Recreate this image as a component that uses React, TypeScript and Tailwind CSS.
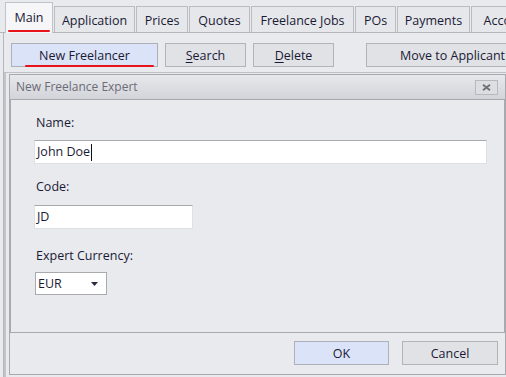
import { ReactNode } from "react";

const tabs = [
  { label: "Application", w: "w-[81px]" },
  { label: "Prices", w: "w-[52px]" },
  { label: "Quotes", w: "w-[61px]" },
  { label: "Freelance Jobs", w: "w-[103px]" },
  { label: "POs", w: "w-[41px]" },
  { label: "Payments", w: "w-[73px]" },
  { label: "Accounting", w: "w-[90px]" },
];

type BtnProps = {
  children: ReactNode;
  className?: string;
  primary?: boolean;
};

const Btn = ({ children, className, primary }: BtnProps) => {
  return (
    <div
      className={
        "flex h-[24px] shrink-0 items-center justify-center border pt-[1px] " +
        (primary
          ? "border-[#adb0b9] bg-[#dbe3f8] "
          : "border-[#b3b4b9] bg-[#e1e2e6] ") +
        (className || "")
      }
    >
      {children}
    </div>
  );
};

const App = () => {
  return (
    <div
      className="flex h-[377px] w-[506px] flex-col overflow-hidden bg-[#e9eaee] text-[12.5px] leading-[16px] text-[#1a1a35]"
      style={{ fontFamily: '"Open Sans", "Noto Sans", sans-serif' }}
    >
      {/* tab strip */}
      <div className="flex h-[33px] shrink-0 items-end border-b border-[#b5b6bd] pl-[5px]">
        <div className="relative z-10 mb-[-1px] flex h-[31px] w-[48px] shrink-0 items-center justify-center border border-b-0 border-[#c2c3c9] bg-[#f6f6f8] pb-[1px]">
          Main
          <div className="absolute bottom-[1px] left-[2px] h-[2px] w-[42px] rounded-full bg-[#e8141c]" />
        </div>
        {tabs.map((t) => (
          <div
            key={t.label}
            className={
              "ml-[1px] flex h-[26px] shrink-0 items-center justify-center overflow-hidden whitespace-nowrap border border-b-0 border-[#bbbcc2] bg-[#e6e7eb] pt-[2px] " +
              t.w
            }
          >
            {t.label}
          </div>
        ))}
      </div>

      {/* tab page */}
      <div className="ml-[3px] flex flex-1 flex-col border-l border-[#b5b6bd]">
        {/* toolbar */}
        <div className="flex h-[40px] shrink-0 items-start gap-[7px] border-b border-[#c0c1c7] pl-[7px] pt-[10px]">
          <Btn primary className="relative w-[147px]">
            New Freelancer
            <div className="absolute bottom-[-1px] left-[13px] h-[2px] w-[129px] rounded-full bg-[#e8141c]" />
          </Btn>
          <Btn className="w-[81px]">
            <span>
              <span className="underline underline-offset-2">S</span>earch
            </span>
          </Btn>
          <Btn className="w-[81px]">
            <span>
              <span className="underline underline-offset-2">D</span>elete
            </span>
          </Btn>
          <Btn className="ml-[25px] w-[170px] justify-start pl-[33px]">Move to Applicant</Btn>
        </div>

        {/* dialog layer */}
        <div className="flex flex-1 flex-col border-l-2 border-[#c3c4ca] pl-[3px] pt-[1px]">
          <div className="flex h-[301px] w-[497px] shrink-0 flex-col border border-[#a7a8b0] bg-[#e9eaee]">
            {/* title bar */}
            <div className="flex h-[24px] shrink-0 items-center justify-between bg-gradient-to-b from-[#e7e8ec] to-[#d3d4d9] pl-[6px] pr-[7px]">
              <span className="text-[12px] text-[#6c6c76]">New Freelance Expert</span>
              <div className="flex h-[15px] w-[23px] items-center justify-center border border-[#b8b9bf] bg-[#dddee2]">
                <svg width="9" height="7" viewBox="0 0 9 7">
                  <path d="M1 0.8 L8 6.2 M8 0.8 L1 6.2" stroke="#70707a" strokeWidth="2" />
                </svg>
              </div>
            </div>

            {/* body */}
            <div className="flex h-[234px] shrink-0 flex-col border border-[#a9aab1] pl-[23px] pt-[15px]">
              <div className="pl-[2px]">Name:</div>
              <div className="mt-[9px] flex h-[24px] w-[453px] items-center border border-[#dfe0e3] border-t-[#a9aaae] bg-white pl-[2px]">
                John Doe
                <span className="ml-[1px] h-[17px] w-[1px] bg-[#111]" />
              </div>

              <div className="mt-[15px] pl-[2px]">Code:</div>
              <div className="mt-[10px] flex h-[24px] w-[159px] items-center border border-[#dfe0e3] border-t-[#a9aaae] bg-white pl-[2px]">
                JD
              </div>

              <div className="mt-[19px] pl-[2px]">Expert Currency:</div>
              <div className="ml-[1px] mt-[8px] flex h-[23px] w-[72px] items-center justify-between border border-[#a9aaae] bg-white pl-[2px] pr-[8px]">
                <span>EUR</span>
                <svg width="7" height="4" viewBox="0 0 7 4">
                  <path d="M0 0 H7 L3.5 4 Z" fill="#2a2a3a" />
                </svg>
              </div>
            </div>

            {/* footer */}
            <div className="flex flex-1 items-start justify-end gap-[13px] pr-[7px] pt-[8px]">
              <Btn primary className="w-[95px]">OK</Btn>
              <Btn className="w-[96px]">Cancel</Btn>
            </div>
          </div>
        </div>
      </div>
    </div>
  );
};

export default App;
